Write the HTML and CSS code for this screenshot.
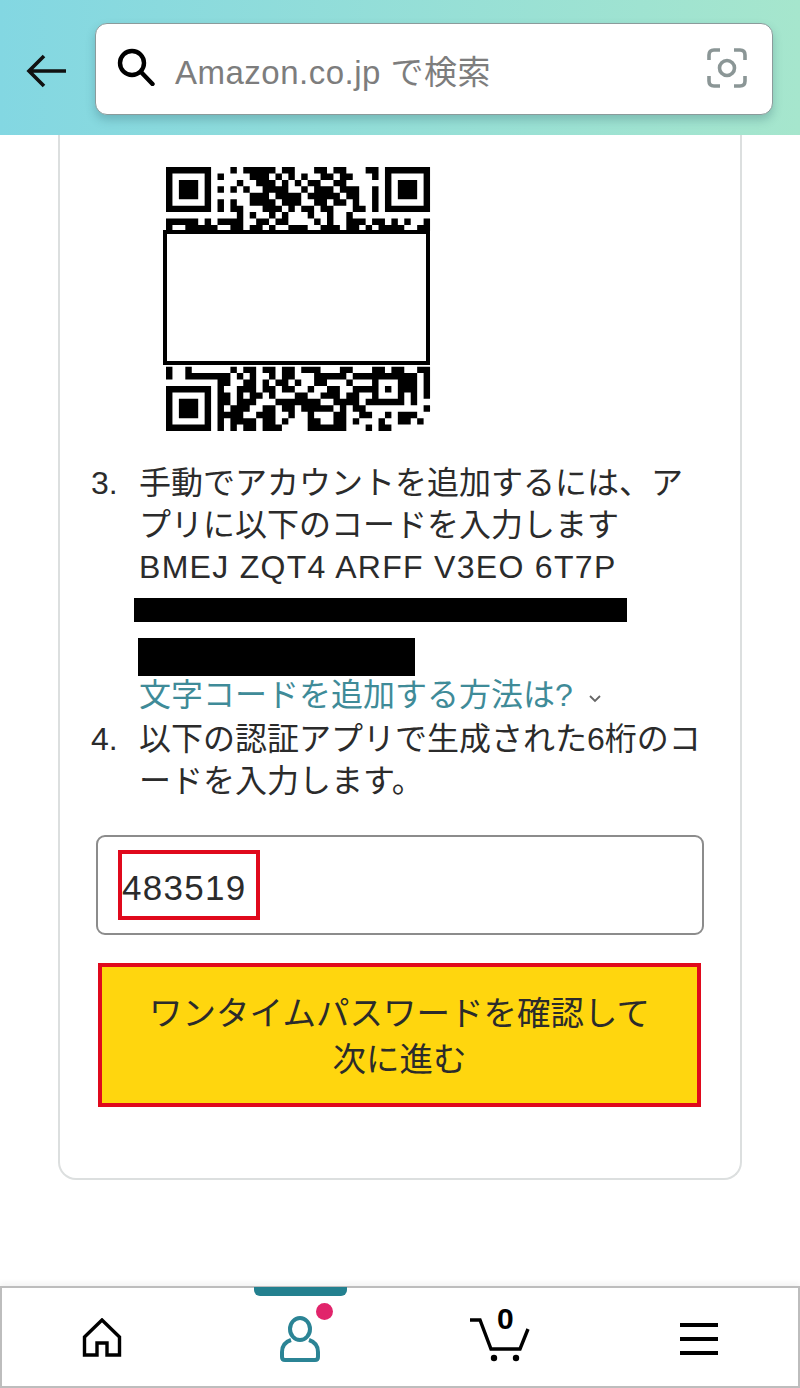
FILE: index.html
```html
<!DOCTYPE html>
<html lang="ja">
<head>
    <meta charset="UTF-8">
    <title>ワンタイムパスワード</title>
    <link rel="stylesheet" href="styles.css">
</head>
<body>
    <div class="screen">
        <header class="top-bar">
            <svg class="back-icon" width="42" height="34" viewBox="0 0 42 34">
                <path d="M40 17H3M18 2L3 17l15 15" fill="none" stroke="#111" stroke-width="3.6"/>
            </svg>
            <div class="search-box">
                <svg class="search-icon" width="38" height="38" viewBox="0 0 38 38">
                    <circle cx="15" cy="15" r="12" fill="none" stroke="#000" stroke-width="4.4"/>
                    <path d="M24 24l11.500 12" fill="none" stroke="#000" stroke-width="4.4" stroke-linecap="round"/>
                </svg>
                <span class="search-text">Amazon.co.jp で検索</span>
                <svg class="camera-icon" width="40" height="40" viewBox="0 0 40 40">
                    <g fill="none" stroke="#8b9696" stroke-width="3.600">
                        <path d="M2 12V7q0-5 5-5h6M27 2h6q5 0 5 5v5M38 28v5q0 5-5 5h-6M13 38H7q-5 0-5-5v-5"/>
                        <circle cx="20" cy="20" r="7.500"/>
                    </g>
                </svg>
            </div>
        </header>

        <main class="content">
            <section class="card">
                <svg class="qr-code" width="270" height="268" viewBox="0 0 270 268">
                    <g transform="translate(3 2) scale(6.44)">
                        <path id="qr-modules" fill="#000"/>
                    </g>
                    <rect x="2" y="67" width="263" height="131" fill="#fff" stroke="#000" stroke-width="4"/>
                </svg>

                <div class="step">
                    <span class="step-no">3.</span>
                    <div class="step-body">
                        <p>手動でアカウントを追加するには、ア<br>プリに以下のコードを入力します</p>
                        <p class="manual-key">BMEJ ZQT4 ARFF V3EO 6T7P</p>
                        <div class="redact redact-long"></div>
                        <div class="redact redact-short"></div>
                        <a class="help-link">文字コードを追加する方法は?
                            <svg class="chevron" width="14" height="10" viewBox="0 0 14 10">
                                <path d="M2 2l5 5 5-5" fill="none" stroke="#666" stroke-width="1.800"/>
                            </svg>
                        </a>
                    </div>
                </div>
                <div class="step">
                    <span class="step-no">4.</span>
                    <div class="step-body">
                        <p>以下の認証アプリで生成された6桁のコ<br>ードを入力します。</p>
                    </div>
                </div>

                <div class="code-input">
                    <span class="code-mark">483519</span>
                </div>
                <button class="submit-btn">ワンタイムパスワードを確認して<br>次に進む</button>
            </section>
        </main>

        <nav class="bottom-nav">
            <div class="nav-item">
                <svg width="40" height="40" viewBox="0 0 40 40">
                    <path d="M2.500 37V19L20 2l17.500 17v18H25V25H15v12z" fill="none" stroke="#000" stroke-width="3.400"/>
                </svg>
            </div>
            <div class="nav-item active">
                <span class="tab-mark"></span>
                <span class="dot"></span>
                <svg width="42" height="46" viewBox="0 0 42 46">
                    <g fill="none" stroke="#2b8495" stroke-width="4">
                        <ellipse cx="20" cy="13" rx="10" ry="11"/>
                        <path d="M11 24C5 26 2 30 2 36v5q0 3 3 3h30q3 0 3-3v-5c0-6-3-10-9-12"/>
                    </g>
                </svg>
            </div>
            <div class="nav-item cart">
                <span class="cart-count">0</span>
                <svg width="62" height="46" viewBox="0 0 62 46">
                    <path d="M1 3h10l11 29h29l8-20" fill="none" stroke="#000" stroke-width="3.400"/>
                    <circle cx="25" cy="41" r="3.200"/>
                    <circle cx="47" cy="41" r="3.200"/>
                </svg>
            </div>
            <div class="nav-item">
                <div class="menu-icon"><span></span><span></span><span></span></div>
            </div>
        </nav>
    </div>
    <script src="qr.js"></script>
</body>
</html>
```

FILE: styles.css
```css
* {
    box-sizing: border-box;
}
body {
    margin: 0;
    font-family: "Liberation Sans", "Noto Sans CJK JP", sans-serif;
    color: #2b2b2b;
    background-color: #fff;
}
p {
    margin: 0;
}
.screen {
    width: 800px;
    height: 1388px;
    display: flex;
    flex-direction: column;
    overflow: hidden;
}

/* header */
.top-bar {
    height: 135px;
    flex: none;
    display: flex;
    align-items: flex-start;
    padding: 23px 27px 0 26px;
    background: linear-gradient(90deg, #83d7e2, #a6e6cd);
}
.back-icon {
    margin: 31px 27px 0 0;
    flex: none;
}
.search-box {
    flex: 1;
    height: 92px;
    display: flex;
    align-items: center;
    padding: 0 25px 2px 21px;
    background-color: #fff;
    border: 1px solid #8b9b9b;
    border-radius: 12px;
    box-shadow: 0 5px 10px rgba(40, 90, 100, 0.28);
}
.search-icon {
    flex: none;
    margin-top: -2px;
}
.search-text {
    flex: 1;
    margin: 4px 0 0 20px;
    font-size: 33px;
    letter-spacing: 0.500px;
    color: #7d7d7d;
}
.camera-icon {
    flex: none;
}

/* card */
.content {
    flex: 1;
    padding: 0 58px;
}
.card {
    height: 1045px;
    padding: 30px 37px 0 31px;
    border: 2px solid #dcdfdf;
    border-top: none;
    border-radius: 0 0 18px 18px;
}
.qr-code {
    display: block;
    margin-left: 72px;
    margin-bottom: 29px;
}
.step {
    display: grid;
    grid-template-columns: 48px 1fr;
    font-size: 32px;
    line-height: 42px;
    white-space: nowrap;
}
.manual-key {
    letter-spacing: 1.300px;
}
.redact {
    background-color: #000;
}
.redact-long {
    width: 493px;
    height: 24px;
    margin: 10px 0 0 -5px;
}
.redact-short {
    width: 277px;
    height: 38px;
    margin: 16px 0 0 -1px;
}
.help-link {
    display: block;
    margin: -2px 0 2px;
    color: #3f8b98;
    font-size: 32px;
}
.chevron {
    margin-left: 6px;
    vertical-align: 2px;
}
.code-input {
    width: 608px;
    height: 100px;
    margin: 33px 0 0 5px;
    padding: 13px 0 0 20px;
    border: 2px solid #8c8c8c;
    border-radius: 9px;
}
.code-mark {
    display: block;
    width: 142px;
    height: 70px;
    border: 4px solid #e0091c;
    font-size: 35px;
    line-height: 68px;
    letter-spacing: 1.300px;
}
.submit-btn {
    display: block;
    width: 603px;
    height: 144px;
    margin: 28px 0 0 7px;
    padding: 4px 0 0;
    background-color: #ffd60e;
    border: 4px solid #e0091c;
    color: #2b2b2b;
    font-family: inherit;
    font-size: 33.500px;
    line-height: 46px;
}

/* bottom nav */
.bottom-nav {
    height: 102px;
    flex: none;
    display: grid;
    grid-template-columns: repeat(4, 1fr);
    border: 2px solid #bdbdbd;
    box-shadow: 0 -3px 6px rgba(0, 0, 0, 0.05);
    background-color: #fff;
}
.nav-item {
    position: relative;
    display: flex;
    justify-content: center;
    align-items: flex-start;
    padding-top: 30px;
}
.active {
    padding-top: 28px;
}
.cart {
    padding-top: 29px;
}
.tab-mark {
    position: absolute;
    top: -1px;
    left: 53px;
    width: 93px;
    height: 9px;
    background-color: #23808f;
    border-radius: 0 0 6px 6px;
}
.dot {
    position: absolute;
    top: 15px;
    left: 115px;
    width: 17px;
    height: 17px;
    background-color: #e1246b;
    border-radius: 50%;
}
.cart-count {
    position: absolute;
    top: 14px;
    left: 97px;
    font-size: 30px;
    font-weight: bold;
    line-height: 34px;
    color: #000;
}
.menu-icon {
    width: 38px;
    margin-top: 5px;
    display: flex;
    flex-direction: column;
    gap: 10px;
}
.menu-icon span {
    height: 4px;
    background-color: #000;
}
```

FILE: qr.js
```js
// visible rows of the code, 1 = dark module. the middle is covered by the white box
var topRows = [
    "1111111 0 0010111110110001101100011 0 1111111",
    "1000001 0 1000011101010100110110001 0 1000001",
    "1011101 0 0001001110101011001100000 0 1011101",
    "1011101 0 1010100111100101110111001 0 1011101",
    "1011101 0 0000011101111011111011001 0 1011101",
    "1000001 0 1010011110111001101101001 0 1000001",
    "1111111 0 1011000111010110110001101 0 1111111",
    "0000000 0 0001010010100010010010000 0 0000000",
    "1111101 0 1111001101100001010011101 1 0101001",
    "1001111 1 0011011010011100111011010 1 1110011"
];
var bottomRows = [
    "1001000000 1 0 11 0 11 0 11 0 111 000 11 000 11 0 11 00 11",
    "1001111111 0101001011 000 1 1111 0 111 11111 11 0 1",
    "00000000 11 0011010110 1 00 11 000 1 000 1 000 1 11 0 1",
    "1111111 0 10 0111011011 001001100111 10101 1101",
    "1000001 0 11 0101101000 110011101100 10001 0101",
    "1011101 0 11 0111000111 111100111101 11111 0100",
    "1011101 0 10 1110011011 011111010110 000000001",
    "1011101 0 11 1100111001 001000110011 001011100",
    "1000001 0 10 1111011010 001100110100 010011010",
    "1111111 0 10 1011011100 001111110001 011000000"
];

function rowsToPath(rows, startRow) {
    var d = "";
    rows.forEach(function(row, r) {
        var bits = row.replace(/ /g, "");
        var re = /1+/g, m;
        while ((m = re.exec(bits))) {
            d += "M" + m.index + " " + (startRow + r) + "h" + m[0].length + "v1h-" + m[0].length + "z";
        }
    });
    return d;
}

document.getElementById("qr-modules").setAttribute("d", rowsToPath(topRows, 0) + rowsToPath(bottomRows, 31));
```
